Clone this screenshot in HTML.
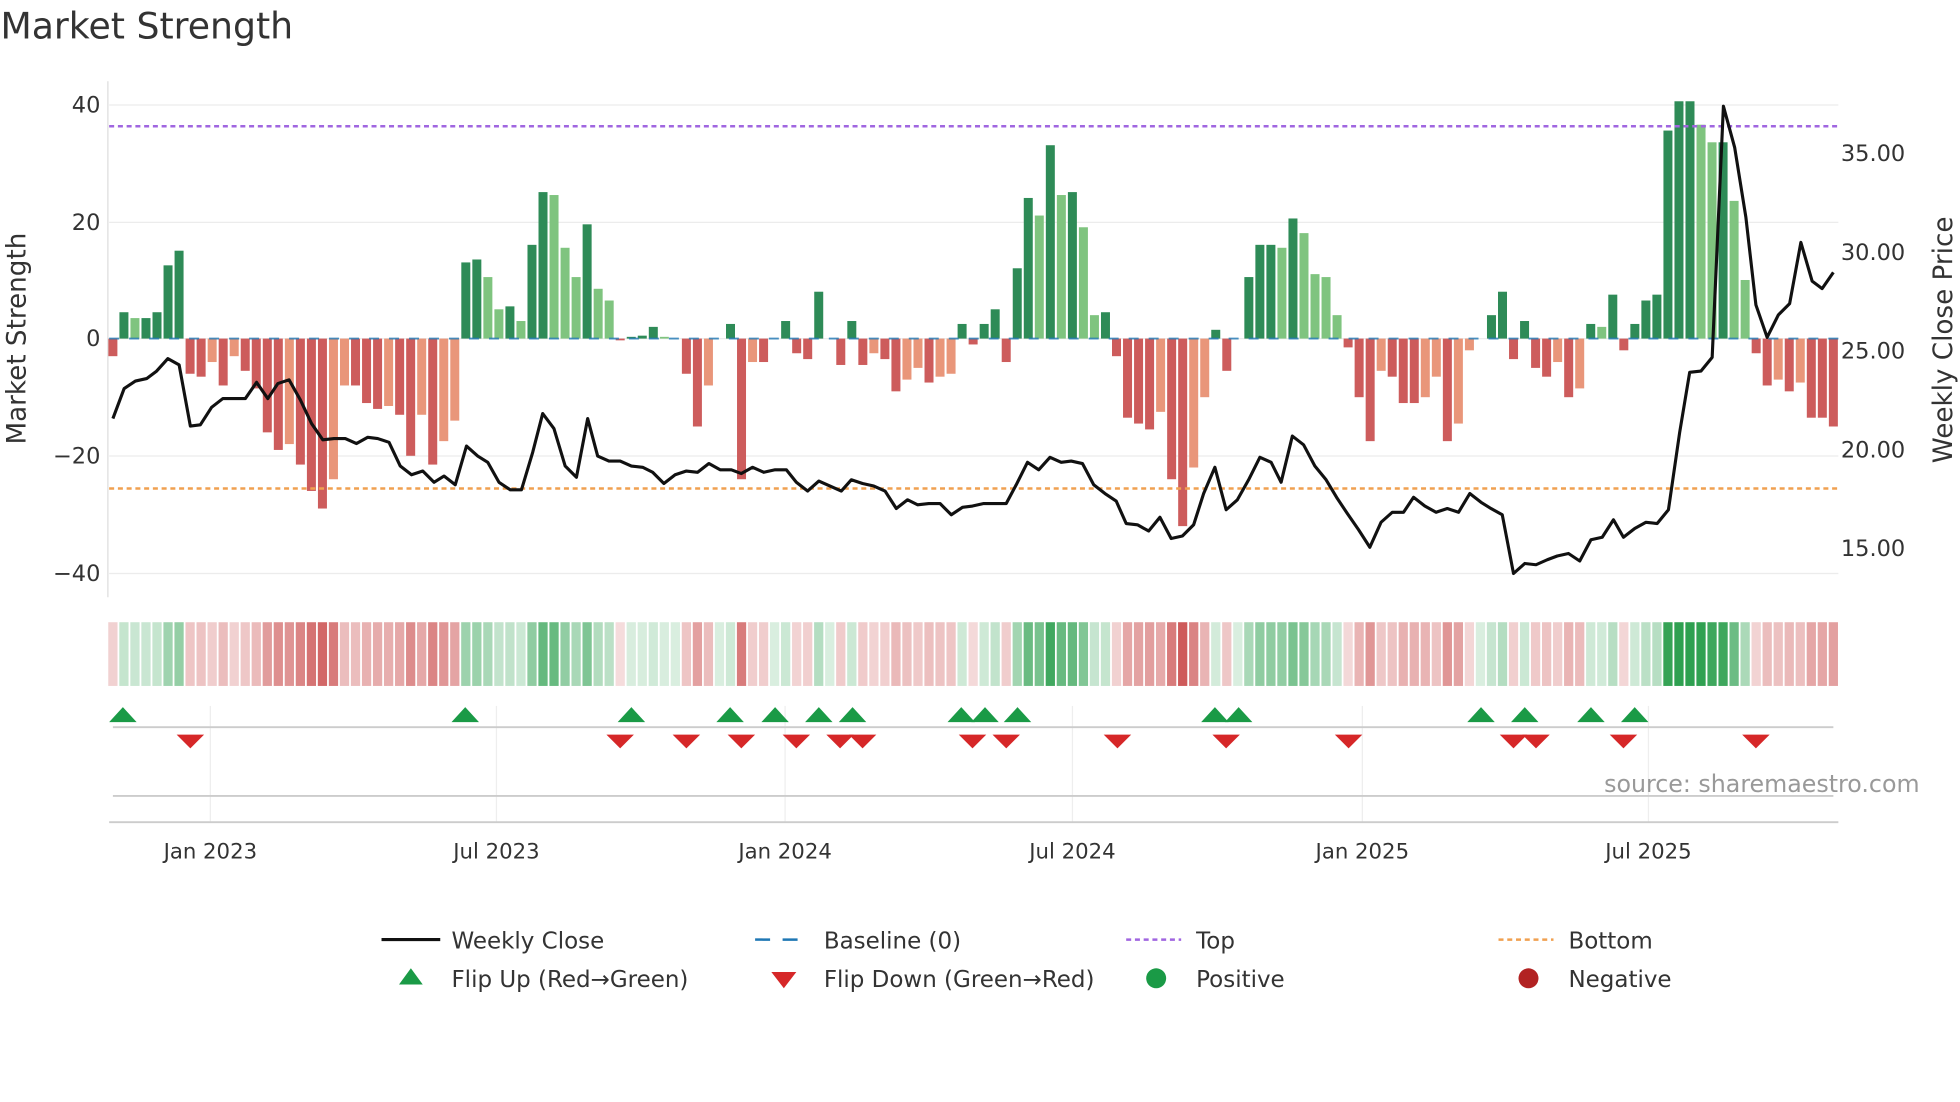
<!DOCTYPE html>
<html><head><meta charset="utf-8"><style>
html,body{margin:0;padding:0;background:#fff;width:1960px;height:1102px;overflow:hidden}
svg{display:block}
text{font-family:"DejaVu Sans","Liberation Sans",sans-serif;fill:#333}
</style></head><body>
<svg id="s" width="1960" height="1102" viewBox="0 0 1568 882" xmlns="http://www.w3.org/2000/svg">
<text x="0" y="31" font-size="29">Market Strength</text>
<g stroke="#ececec" stroke-width="1">
<line x1="87" x2="1471" y1="84" y2="84"/><line x1="87" x2="1471" y1="178" y2="178"/><line x1="87" x2="1471" y1="271" y2="271"/><line x1="87" x2="1471" y1="365" y2="365"/><line x1="87" x2="1471" y1="459" y2="459"/>
</g>
<line x1="86" x2="86" y1="65" y2="478" stroke="#ddd"/>
<g font-size="18" text-anchor="end"><text x="80" y="90">40</text><text x="80" y="184">20</text><text x="80" y="277">0</text><text x="80" y="371">−20</text><text x="80" y="465">−40</text></g>
<g font-size="18"><text x="1473" y="129">35.00</text><text x="1473" y="208">30.00</text><text x="1473" y="287">25.00</text><text x="1473" y="366">20.00</text><text x="1473" y="445">15.00</text></g>
<text font-size="21" transform="translate(20,271) rotate(-90)" text-anchor="middle">Market Strength</text>
<text font-size="21" transform="translate(1562,272) rotate(-90)" text-anchor="middle">Weekly Close Price</text>
<g id="bars"></g>
<line x1="87" x2="1471" y1="271" y2="271" stroke="#1f77b4" stroke-width="1.5" stroke-dasharray="8,8" opacity=".8"/>
<line x1="87" x2="1471" y1="101" y2="101" stroke="#a066e0" stroke-width="2" stroke-dasharray="4,3"/>
<line x1="87" x2="1471" y1="391" y2="391" stroke="#f0a050" stroke-width="2" stroke-dasharray="4,3"/>
<polyline id="price" fill="none" stroke="#111" stroke-width="2.5" stroke-linejoin="round"/>
<g id="heat"></g>
<g stroke="#eee"><line x1="168" x2="168" y1="565" y2="658"/><line x1="397" x2="397" y1="565" y2="658"/><line x1="628" x2="628" y1="565" y2="658"/><line x1="858" x2="858" y1="565" y2="658"/><line x1="1090" x2="1090" y1="565" y2="658"/><line x1="1319" x2="1319" y1="565" y2="658"/></g>
<line x1="90" x2="1467" y1="582" y2="582" stroke="#ccc" stroke-width="1.5"/>
<line x1="90" x2="1467" y1="637" y2="637" stroke="#ccc" stroke-width="1.5"/>
<line x1="87" x2="1471" y1="658" y2="658" stroke="#ccc" stroke-width="1.5"/>
<g id="tri"></g>
<text x="1536" y="634" font-size="19" text-anchor="end" style="fill:#999">source: sharemaestro.com</text>
<g font-size="17" text-anchor="middle"><text x="168" y="687">Jan 2023</text><text x="397" y="687">Jul 2023</text><text x="628" y="687">Jan 2024</text><text x="858" y="687">Jul 2024</text><text x="1090" y="687">Jan 2025</text><text x="1319" y="687">Jul 2025</text></g>
<g font-size="18.4">
<line x1="305" x2="352" y1="752" y2="752" stroke="#111" stroke-width="2.5"/><text x="361" y="759">Weekly Close</text>
<line x1="604" x2="648" y1="752" y2="752" stroke="#1f77b4" stroke-width="2" stroke-dasharray="12,10"/><text x="659" y="759">Baseline (0)</text>
<line x1="901" x2="945" y1="752" y2="752" stroke="#a066e0" stroke-width="2" stroke-dasharray="4,3"/><text x="957" y="759">Top</text>
<line x1="1199" x2="1243" y1="752" y2="752" stroke="#f0a050" stroke-width="2" stroke-dasharray="4,3"/><text x="1255" y="759">Bottom</text>
<polygon points="319,788 338,788 328.5,775" fill="#1a9a46"/><text x="361" y="790">Flip Up (Red→Green)</text>
<polygon points="617,778 637,778 627,791" fill="#d62728"/><text x="659" y="790">Flip Down (Green→Red)</text>
<circle cx="925" cy="783" r="8" fill="#1a9a46"/><text x="957" y="790">Positive</text>
<circle cx="1223" cy="783" r="8" fill="#b22222"/><text x="1255" y="790">Negative</text>
</g>
</svg>
<script>
var v=[-3,4.5,3.5,3.5,4.5,12.5,15,-6,-6.5,-4,-8,-3,-5.5,-8.5,-16,-19,-18,-21.5,-26,-29,-24,-8,-8,-11,-12,-11.5,-13,-20,-13,-21.5,-17.5,-14,13,13.5,10.5,5,5.5,3,16,25,24.5,15.5,10.5,19.5,8.5,6.5,-0.3,0.3,0.5,2,0.3,0,-6,-15,-8,0,2.5,-24,-4,-4,0,3,-2.5,-3.5,8,0,-4.5,3,-4.5,-2.5,-3.5,-9,-7,-5,-7.5,-6.5,-6,2.5,-1,2.5,5,-4,12,24,21,33,24.5,25,19,4,4.5,-3,-13.5,-14.5,-15.5,-12.5,-24,-32,-22,-10,1.5,-5.5,0,10.5,16,16,15.5,20.5,18,11,10.5,4,-1.5,-10,-17.5,-5.5,-6.5,-11,-11,-10,-6.5,-17.5,-14.5,-2,0,4,8,-3.5,3,-5,-6.5,-4,-10,-8.5,2.5,2,7.5,-2,2.5,6.5,7.5,35.5,40.5,40.5,36.5,33.5,33.5,23.5,10,-2.5,-8,-7,-9,-7.5,-13.5,-13.5,-15];
var n=v.length,x0=90,st=(1467-90)/(n-1),ns="http://www.w3.org/2000/svg";
function el(g,t,a){var e=document.createElementNS(ns,t);for(var k in a)e.setAttribute(k,a[k]);document.getElementById(g).appendChild(e);}
for(var i=0;i<n;i++){var x=x0+i*st,y=v[i],p=i?v[i-1]:0,h=Math.abs(y)*4.69;var c;
 if(y>=0)c=(y>=p)?"#2e8b57":"#7fc47f";else c=(y<=p)?"#cd5c5c":"#e9967a";
 if(h>0.5)el("bars","rect",{x:x-3.6,y:y>=0?271-h:271,width:7.2,height:h,fill:c});
 var a=Math.min(1,0.18+Math.abs(y)/45);var hc=y>=0?"rgba(46,160,80,"+a+")":"rgba(200,70,70,"+a+")";
 el("heat","rect",{x:x-3.7,y:498,width:7.4,height:51,fill:hc});}
var pts=[90,335,99,311,108,305,117,303,125,297,134,287,143,292,152,341,160,340,169,326,178,319,187,319,196,319,205,306,214,319,222,307,231,304,240,320,249,339,258,352,267,351,276,351,285,355,294,350,302,351,311,354,320,373,329,380,338,377,347,386,355,381,364,388,373,357,382,365,390,370,399,386,408,392,417,392,426,362,434,331,443,343,452,373,461,382,470,335,478,365,487,369,496,369,505,373,514,374,522,378,531,387,540,380,549,377,558,378,567,371,576,376,585,376,593,379,602,374,611,378,620,376,629,376,637,386,646,393,655,385,664,389,673,393,681,384,690,387,699,389,708,393,717,407,726,400,734,404,743,403,752,403,761,412,770,406,778,405,787,403,796,403,805,403,813,388,822,370,831,376,840,366,849,370,857,369,866,371,875,388,884,395,893,401,901,419,910,420,919,425,928,414,937,431,946,429,955,420,963,395,972,374,981,408,990,400,999,384,1008,366,1017,370,1025,386,1034,349,1043,356,1052,373,1061,384,1070,399,1078,411,1087,424,1096,438,1105,418,1114,410,1123,410,1131,398,1140,405,1149,410,1158,407,1167,410,1176,395,1185,402,1193,407,1202,412,1211,459,1220,451,1229,452,1238,448,1246,445,1255,443,1264,449,1273,432,1282,430,1291,416,1299,430,1308,423,1317,418,1326,419,1335,408,1344,346,1352,298,1361,297,1370,286,1379,85,1388,118,1397,174,1405,244,1414,270,1423,252,1432,243,1441,194,1450,225,1458,231,1467,218];
var s="";for(var j=0;j<pts.length;j+=2)s+=pts[j]+","+pts[j+1]+" ";document.getElementById("price").setAttribute("points",s);
[98,372,505,584,620,655,682,769,788,814,972,991,1185,1220,1273,1308].forEach(function(x){el("tri","polygon",{points:(x-11)+",578 "+(x+11)+",578 "+x+",566",fill:"#1a9a46"});});
[152,496,549,593,637,672,690,778,805,894,981,1079,1211,1229,1299,1405].forEach(function(x){el("tri","polygon",{points:(x-11)+",588 "+(x+11)+",588 "+x+",599",fill:"#d62728"});});
</script>
</body></html>
